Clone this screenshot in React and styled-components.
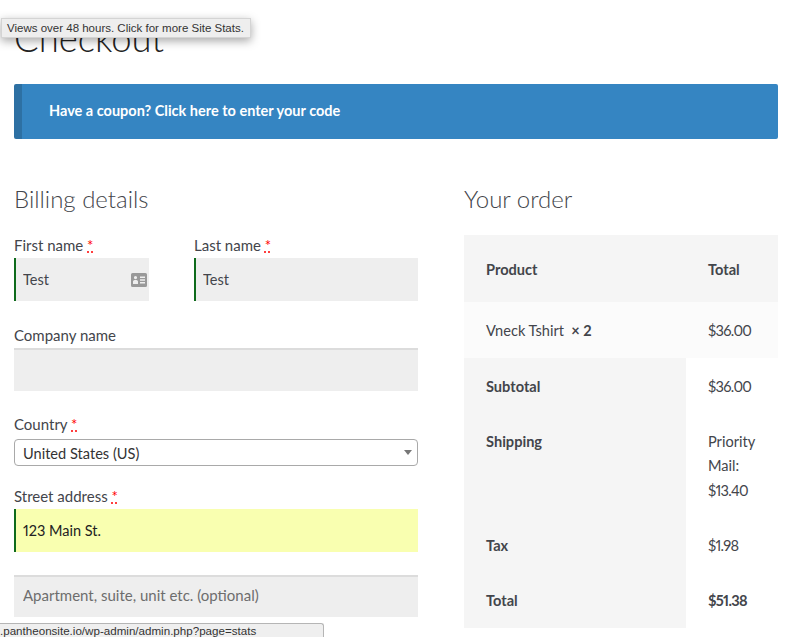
import React from 'react';
import styled, { createGlobalStyle } from 'styled-components';

const App = () => {
  return (
    <>
      <GlobalStyle />
      <Page>
        <Tooltip>Views over 48 hours. Click for more Site Stats.</Tooltip>
        <Title>Checkout</Title>
        <Notice>Have a coupon? Click here to enter your code</Notice>
        <Columns>
          <section>
            <Heading>Billing details</Heading>
            <NameRow>
              <Field $width="135px" $gap="24.5px">
                <Label>First name <Req>*</Req></Label>
                <InputWrap>
                  <Input $valid readOnly value="Test" />
                  <CardIcon viewBox="0 0 16 14">
                    <path fill="#999" fillRule="evenodd" d="M1.5 0h13A1.5 1.5 0 0 1 16 1.5v11a1.5 1.5 0 0 1-1.5 1.5h-13A1.5 1.5 0 0 1 0 12.500v-11A1.500 1.500 0 0 1 1.500 0zM4.500 3a1.600 1.600 0 1 0 0 3.200 1.600 1.600 0 0 0 0-3.200zM2 11h5V8.500C7 7.500 6 7 4.500 7S2 7.500 2 8.500zM9 3.500V5h5V3.500zM9 6.300v1.400h5V6.300zM9 9v1.500h5V9z" />
                  </CardIcon>
                </InputWrap>
              </Field>
              <Field $width="224px" $gap="24.5px">
                <Label>Last name <Req>*</Req></Label>
                <Input $valid readOnly value="Test" />
              </Field>
            </NameRow>
            <Field $gap="23.5px">
              <Label>Company name</Label>
              <Input readOnly value="" />
            </Field>
            <Field $gap="20.5px">
              <Label>Country <Req>*</Req></Label>
              <SelectBox>
                United States (US)
                <Caret />
              </SelectBox>
            </Field>
            <Field $gap="23px">
              <Label>Street address <Req>*</Req></Label>
              <Input $valid $autofill readOnly value="123 Main St." />
            </Field>
            <Input readOnly placeholder="Apartment, suite, unit etc. (optional)" />
          </section>
          <section>
            <Heading>Your order</Heading>
            <OrderTable>
              <colgroup>
                <col width="222" />
                <col width="92" />
              </colgroup>
              <thead>
                <tr>
                  <HeadCell>Product</HeadCell>
                  <HeadCell>Total</HeadCell>
                </tr>
              </thead>
              <tbody>
                <tr>
                  <ItemCell>Vneck Tshirt <strong>&nbsp;× 2</strong></ItemCell>
                  <ItemCell><Amount>$36.00</Amount></ItemCell>
                </tr>
              </tbody>
              <tfoot>
                <tr>
                  <SumLabel>Subtotal</SumLabel>
                  <SumValue><Amount>$36.00</Amount></SumValue>
                </tr>
                <tr>
                  <SumLabel>Shipping</SumLabel>
                  <SumValue>Priority Mail: <Amount>$13.40</Amount></SumValue>
                </tr>
                <tr>
                  <SumLabel>Tax</SumLabel>
                  <SumValue><Amount>$1.98</Amount></SumValue>
                </tr>
                <tr>
                  <SumLabel>Total</SumLabel>
                  <SumValue $strong><Amount>$51.38</Amount></SumValue>
                </tr>
              </tfoot>
            </OrderTable>
          </section>
        </Columns>
        <StatusBar>.pantheonsite.io/wp-admin/admin.php?page=stats</StatusBar>
      </Page>
    </>
  );
};

export default App;

// Styled Components
const GlobalStyle = createGlobalStyle`
  html, body {
    margin: 0;
    height: 100%;
    overflow: hidden;
    background: #fff;
  }
  * {
    box-sizing: border-box;
  }
`;

const Page = styled.div`
  position: relative;
  width: 800px;
  height: 637px;
  overflow: hidden;
  padding: 0 22px 0 14px;
  font-family: 'Lato', sans-serif;
  font-size: 15px;
  font-variant-numeric: proportional-nums;
  color: #43454b;
`;

const Tooltip = styled.div`
  position: absolute;
  top: 18px;
  left: 1px;
  width: 250px;
  height: 20px;
  padding-left: 5px;
  background: #eeeeee;
  border: 1px solid #d4d4d4;
  box-shadow: 0 3px 10px rgba(0, 0, 0, 0.35);
  font-family: 'Liberation Sans', sans-serif;
  font-size: 11.5px;
  line-height: 18px;
  color: #333;
  white-space: nowrap;
  z-index: 2;
`;

const Title = styled.h1`
  margin: 0;
  padding-top: 14px;
  height: 84px;
  font-size: 36.5px;
  line-height: 48px;
  font-weight: 300;
  color: #222;
`;

const Notice = styled.div`
  height: 55px;
  padding-left: 27px;
  background: #3585c2;
  border-left: 8px solid #2d70a3;
  border-radius: 2px;
  font-size: 14.5px;
  font-weight: 700;
  line-height: 54px;
  color: #fff;
`;

const Columns = styled.div`
  display: grid;
  grid-template-columns: 404px 314px;
  column-gap: 46px;
  padding-top: 43px;
`;

const Heading = styled.h3`
  margin: 0 0 18px;
  height: 35px;
  font-size: 24px;
  line-height: 33px;
  font-weight: 300;
  color: #43454b;
`;

const NameRow = styled.div`
  display: flex;
  gap: 45px;
`;

const Field = styled.div`
  width: ${({ $width }) => $width || '100%'};
  margin-bottom: ${({ $gap }) => $gap || '23px'};
`;

const Label = styled.label`
  display: block;
  height: 23px;
  font-size: 15px;
  line-height: 21px;
`;

const Req = styled.abbr`
  color: #f00;
  text-decoration: underline dotted #f00;
`;

const InputWrap = styled.div`
  position: relative;
`;

const Input = styled.input`
  display: block;
  width: 100%;
  height: 42.5px;
  border: 0;
  border-left: ${({ $valid }) => ($valid ? '2px solid #0f6b1c' : '0')};
  box-shadow: ${({ $valid }) => ($valid ? 'none' : 'inset 0 2px 0 #dcdcdc')};
  outline: 0;
  padding: 0 0 0 ${({ $valid }) => ($valid ? '7px' : '9px')};
  background: ${({ $autofill }) => ($autofill ? '#f9ffb0' : '#eeeeee')};
  font-family: inherit;
  font-size: 14.5px;
  font-variant-numeric: proportional-nums;
  color: ${({ $autofill }) => ($autofill ? '#222' : '#43454b')};

  &::placeholder {
    font-size: 15px;
    color: #6d6d6d;
    opacity: 1;
  }
`;

const CardIcon = styled.svg`
  position: absolute;
  top: 15px;
  right: 2px;
  width: 16px;
  height: 14px;
`;

const SelectBox = styled.div`
  position: relative;
  height: 26.5px;
  margin-top: 2px;
  padding-left: 8px;
  background: #fff;
  border: 1px solid #a9a9a9;
  border-radius: 4px;
  font-size: 14.6px;
  line-height: 27px;
  color: #333;
`;

const Caret = styled.span`
  position: absolute;
  top: 10px;
  right: 5px;
  border-left: 4px solid transparent;
  border-right: 4px solid transparent;
  border-top: 5px solid #777;
`;

const OrderTable = styled.table`
  width: 314px;
  table-layout: fixed;
  border-collapse: collapse;
  border-spacing: 0;
  font-size: 14.6px;
  line-height: 24.5px;
`;

const HeadCell = styled.th`
  height: 67px;
  padding: 3px 0 0 22px;
  background: #f5f5f5;
  text-align: left;
  font-weight: 700;
`;

const ItemCell = styled.td`
  height: 56px;
  padding: 2px 0 0 22px;
  background: #fbfbfb;

  strong {
    font-weight: 700;
  }
`;

const SumLabel = styled.th`
  padding: 16.5px 0 14.25px 22px;
  background: #f5f5f5;
  text-align: left;
  vertical-align: top;
  font-weight: 700;
`;

const SumValue = styled.td`
  padding: 16.5px 0 14.25px 22px;
  vertical-align: top;
  font-weight: ${({ $strong }) => ($strong ? 700 : 400)};
`;

const Amount = styled.span`
  letter-spacing: -0.7px;
`;

const StatusBar = styled.div`
  position: absolute;
  left: 0;
  bottom: 0;
  width: 324px;
  height: 14px;
  background: #efefef;
  border: 1px solid #b5b5b5;
  border-left: 0;
  border-bottom: 0;
  border-top-right-radius: 3px;
  font-family: 'Liberation Sans', sans-serif;
  font-size: 11.6px;
  line-height: 14px;
  color: #333;
  white-space: nowrap;
`;
